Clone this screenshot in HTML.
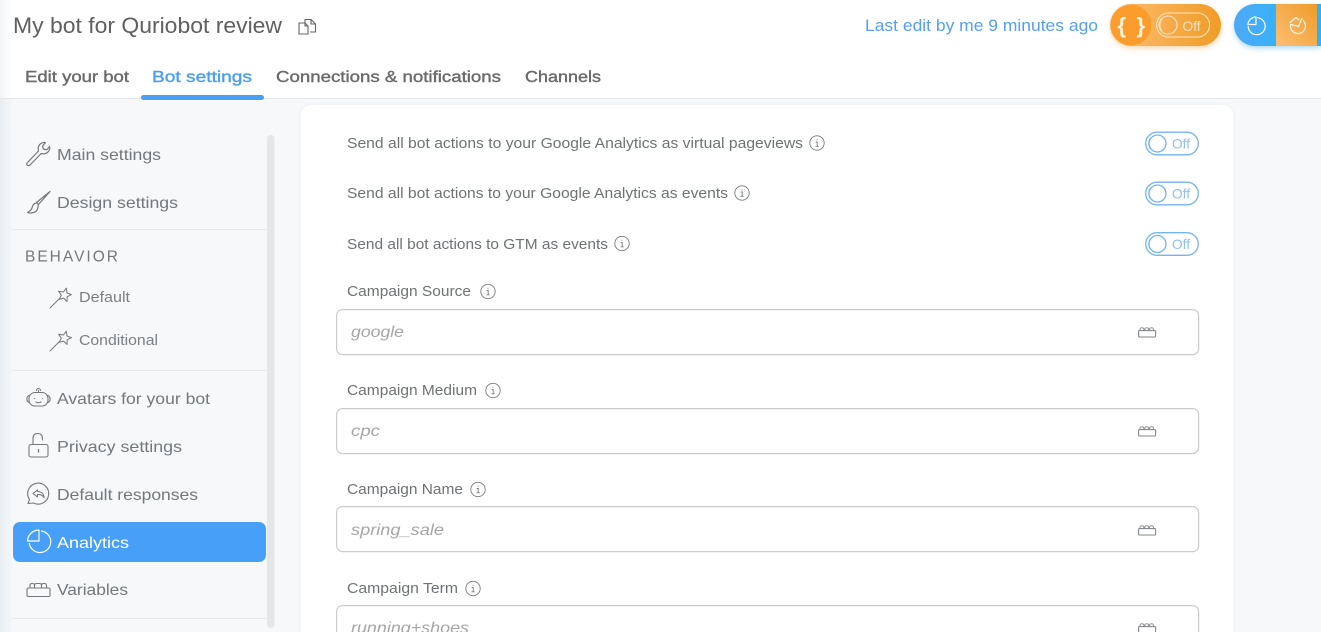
<!DOCTYPE html>
<html><head><meta charset="utf-8"><style>
html,body{margin:0;padding:0;width:1321px;height:632px;overflow:hidden;background:#fff}
svg{display:block;filter:blur(.25px)}
text{font-family:"Liberation Sans",sans-serif}
.g{fill:#74777b;font-size:16px}
.s{fill:#6f7275;font-size:14.5px}
.p{fill:#a6a6a6;font-size:16px;font-style:italic}
.t{fill:#6a6a6a;font-size:16px;stroke:#6a6a6a;stroke-width:.4}
.ic{fill:none;stroke:#75787c;stroke-width:1.2;stroke-linecap:round;stroke-linejoin:round}
.in{fill:#fff;stroke:#cbcbcb;stroke-width:1.2}
</style></head><body>
<svg width="1321" height="632" viewBox="0 0 1321 632" xmlns="http://www.w3.org/2000/svg">
<defs>
<linearGradient id="lg" x1="0" x2="1"><stop offset="0" stop-color="#e9eef2"/><stop offset="1" stop-color="#f6f8fa"/></linearGradient>
<linearGradient id="lh" x1="0" x2="1"><stop offset="0" stop-color="#f1f4f6"/><stop offset="1" stop-color="#fff"/></linearGradient>
<linearGradient id="or" x1="0" x2="1" y1="0" y2="0"><stop offset="0" stop-color="#fdbe75"/><stop offset="1" stop-color="#f09c26"/></linearGradient>
<linearGradient id="bl" x1="0" x2="1" y1="0" y2="0"><stop offset="0" stop-color="#4fa8f6"/><stop offset="1" stop-color="#1dbcfb"/></linearGradient>
<linearGradient id="or2" x1="0" x2="1" y1="1" y2="0"><stop offset="0" stop-color="#fdbe75"/><stop offset="1" stop-color="#ee9c2a"/></linearGradient>
<filter id="sh" x="-20%" y="-30%" width="140%" height="170%"><feGaussianBlur stdDeviation="3"/></filter>
<filter id="cs" x="-5%" y="-5%" width="110%" height="110%"><feGaussianBlur stdDeviation="2"/></filter>
<g id="info"><circle cx="0" cy="0" r="7.200" fill="none" stroke="#7a7c7f" stroke-width=".9"/><path d="M-1.300-1h1.500v4.200M-1.500 3.300h3.200M0-3.700v.9" fill="none" stroke="#7a7c7f" stroke-width=".9"/></g>
<g id="tog"><rect x="0.7" y="0.7" width="52.6" height="22.6" rx="11.3" fill="#fff" stroke="#76b4ef" stroke-width="1.3"/><circle cx="12.5" cy="12" r="8.5" fill="#fff" stroke="#76b4ef" stroke-width="1.3"/><path d="M5.5 6.5A9.5 9.5 0 0 0 5.5 17.5" fill="none" stroke="#76b4ef"/><text x="27" y="17" font-size="14" fill="#8fc0f0" textLength="18" lengthAdjust="spacingAndGlyphs">Off</text></g>
<g id="var"><rect x="0.6" y="3.6" width="17" height="6.4" rx="1" fill="none" stroke="#85878a" stroke-width="1.1"/><path d="M2 3.500V2.200q0-1.400 1.400-1.400h1q1.400 0 1.400 1.400v1.300M6.800 3.500V2.200q0-1.400 1.400-1.400h1q1.400 0 1.400 1.400v1.300M11.600 3.500V2.200q0-1.400 1.400-1.400h1q1.400 0 1.400 1.400v1.300" fill="none" stroke="#85878a" stroke-width=".9"/></g>
<g id="wand" class="ic" style="stroke-width:1"><path d="M0 20 9.500 10.500"/><path d="M16.300 .2 17 5 21.500 6.600 17.200 8.700 17 13.500 13.700 10.100 9.100 11.400 11.300 7.200 8.600 3.200 13.400 4z"/></g>
</defs>

<rect width="1321" height="98" fill="#fff"/>
<rect width="12" height="98" fill="url(#lh)"/>
<rect y="98" width="1321" height="534" fill="#f6f8fa"/>
<rect y="98" width="14" height="534" fill="url(#lg)"/>
<rect y="98" width="1321" height="1" fill="#e4e7ea"/>

<text x="13" y="33" font-size="22.500" fill="#606060" textLength="269" lengthAdjust="spacingAndGlyphs">My bot for Quriobot review</text>
<g fill="none" stroke="#646464" stroke-width="1.100" stroke-linejoin="round"><path d="M299 23h6l3 3v8h-9z"/><path d="M305 23v3h3"/><path d="M305 22.500V19.500h6l4.500 4.500v8H310"/><path d="M311 19.500v4.500h4.500"/></g>

<text x="25" y="82" class="t" textLength="104" lengthAdjust="spacingAndGlyphs">Edit your bot</text>
<text x="152" y="82" class="t" style="fill:#4b9ff3;stroke:#4b9ff3" textLength="100" lengthAdjust="spacingAndGlyphs">Bot settings</text>
<text x="276" y="82" class="t" textLength="225" lengthAdjust="spacingAndGlyphs">Connections &amp; notifications</text>
<text x="525" y="82" class="t" textLength="76" lengthAdjust="spacingAndGlyphs">Channels</text>
<rect x="141" y="95" width="123" height="5" rx="2.500" fill="#4b9ff3"/>

<text x="865" y="31" font-size="16.500" fill="#559ff0" textLength="233" lengthAdjust="spacingAndGlyphs">Last edit by me 9 minutes ago</text>

<!-- orange pill -->
<rect x="1111" y="7" width="110" height="41" rx="20" fill="#f9b566" opacity=".55" filter="url(#sh)"/>
<rect x="1110" y="4" width="111" height="42" rx="21" fill="url(#or)"/>
<circle cx="1131" cy="25" r="20.500" fill="#fb9d2c"/>
<text x="1117.500" y="33" font-size="22" font-weight="bold" fill="#fff3e0">{</text>
<text x="1136.500" y="33" font-size="22" font-weight="bold" fill="#fff3e0">}</text>
<rect x="1156.600" y="13" width="53" height="24" rx="12" fill="none" stroke="#fde3c0" stroke-width="1.100"/>
<circle cx="1168" cy="25" r="9" fill="none" stroke="#fde3c0" stroke-width="1.100"/>
<path d="M1161.500 19.500a10 10 0 0 0 0 11" fill="none" stroke="#fde3c0"/>
<text x="1182.500" y="31" font-size="14" fill="#fde3c0" textLength="18" lengthAdjust="spacingAndGlyphs">Off</text>

<!-- blue pill -->
<path d="M1255 7h66v41h-66a20 20 0 0 1 0-41z" fill="#4fb4f8" opacity=".5" filter="url(#sh)"/>
<path d="M1255 4h66v42h-66a21 21 0 0 1 0-42z" fill="url(#bl)"/>
<rect x="1276" y="4" width="41" height="42" fill="url(#or2)"/>
<rect x="1317" y="4" width="4" height="42" fill="#2cb2f8"/>
<g fill="none" stroke="#fff" stroke-width="1.200" stroke-linejoin="round" stroke-linecap="round">
<path d="M1257.500 17.700A8.500 8.500 0 1 1 1248.200 26.500"/><path d="M1256 17V24.500H1247.800A8.500 8.500 0 0 1 1256 17z"/>
</g>
<g fill="none" stroke="#fff6e8" stroke-width="1.200" stroke-linejoin="round" stroke-linecap="round">
<path d="M1303.500 21A7.500 7.500 0 1 1 1290.600 24.500L1298.500 26.500 1302 18.500"/><path d="M1290 22.500 1296 17.500 1299 20"/>
</g>

<!-- sidebar -->
<rect x="267" y="135" width="7.500" height="493" rx="3.500" fill="#e5e6e8"/>

<path class="ic" d="M27.500 162.500l11-11.500c-1.500-5 2-9 7-8.500l-3 3.500 1 3 3.200.8 3-3.300c.8 4.800-3.800 8.500-8.500 7l-11.200 11.500c-2.200 1.600-4.600-.5-2.500-2.500z"/>
<text x="57" y="160" class="g" textLength="104" lengthAdjust="spacingAndGlyphs">Main settings</text>

<path class="ic" d="M50 191.500 36.500 202.500 38.500 204.500 50 191.500zM36.500 203c-3 .3-4 2.500-4.500 5-.4 2-2.500 3.300-4.500 4.500 3.500 1 8.500.3 9.800-3 .8-1.800 1-3.500 1-5"/>
<text x="57" y="208" class="g" textLength="121" lengthAdjust="spacingAndGlyphs">Design settings</text>

<rect x="13" y="229" width="253" height="1" fill="#e7e9eb"/>
<text x="25" y="261.500" font-size="15.500" fill="#75777b" textLength="93" lengthAdjust="spacing">BEHAVIOR</text>

<use href="#wand" x="50" y="288"/>
<text x="79" y="302" class="s" style="fill:#7d8083" textLength="51" lengthAdjust="spacingAndGlyphs">Default</text>
<use href="#wand" x="50" y="331"/>
<text x="79" y="345" class="s" style="fill:#7d8083" textLength="79" lengthAdjust="spacingAndGlyphs">Conditional</text>

<rect x="13" y="370" width="253" height="1" fill="#e7e9eb"/>

<g class="ic" style="stroke-width:1.100"><rect x="29" y="392.500" width="19" height="13.500" rx="6"/><path d="M29 395.500c-2.800 1-2.800 6 0 7M48 395.500c2.800 1 2.800 6 0 7M38.500 392.500v-2"/><path d="M36.500 390.500a2 2 0 0 1 4 0"/><path d="M34.500 398.500h.2M42.500 398.500h.2M36 402q2.500 1.500 5 0"/></g>
<text x="57" y="404" class="g" textLength="153" lengthAdjust="spacingAndGlyphs">Avatars for your bot</text>

<g class="ic" style="stroke-width:1.100"><rect x="29" y="444.500" width="19" height="12.500" rx="2"/><path d="M33 444.500v-6q0-5 4.700-5t4.700 5v1.500"/><path d="M38.500 449.500v2.500" style="stroke-width:1.300"/></g>
<text x="57" y="452" class="g" textLength="125" lengthAdjust="spacingAndGlyphs">Privacy settings</text>

<g class="ic" style="stroke-width:1.100"><path d="M28 503.500l1.500-4a10.500 10.500 0 1 1 4 3.500z"/><path d="M37.500 490l-4.500 3.500 4.500 3.500v-2.500c3-.4 5 .8 6.500 3-.3-3.500-2.500-6-6.500-6z"/></g>
<text x="57" y="500" class="g" textLength="141" lengthAdjust="spacingAndGlyphs">Default responses</text>

<rect x="13" y="522" width="253" height="40" rx="7" fill="#479ff8"/>
<g fill="none" stroke="#fff" stroke-width="1.200" stroke-linejoin="round"><path d="M41 531A10.800 10.800 0 1 1 29.200 543"/><path d="M39 530V541H27.500A11.500 11.500 0 0 1 39 530z"/></g>
<text x="57" y="548" class="g" style="fill:#fff" textLength="72" lengthAdjust="spacingAndGlyphs">Analytics</text>

<g class="ic" style="stroke-width:1.100"><rect x="27" y="588" width="23" height="8.500" rx="1.200"/><path d="M30 588v-2.500q0-2 2-2h.5q2 0 2 2v2.500M34.500 588v-2.500q0-2 2-2h3q2 0 2 2v2.500M41.500 588v-2.500q0-2 2-2h1q2 0 2 2v2.500"/></g>
<text x="57" y="595" class="g" textLength="71" lengthAdjust="spacingAndGlyphs">Variables</text>
<rect x="13" y="618" width="253" height="1" fill="#e7e9eb"/>

<!-- card -->
<rect x="301" y="105" width="932" height="560" rx="10" fill="#dfe3e8" opacity=".5" filter="url(#cs)"/>
<rect x="301" y="105" width="932" height="560" rx="10" fill="#fff"/>

<text x="347" y="148" class="s" textLength="456" lengthAdjust="spacingAndGlyphs">Send all bot actions to your Google Analytics as virtual pageviews</text>
<use href="#info" x="817" y="143"/>
<use href="#tog" x="1145" y="131.500"/>

<text x="347" y="198" class="s" textLength="381" lengthAdjust="spacingAndGlyphs">Send all bot actions to your Google Analytics as events</text>
<use href="#info" x="742" y="193"/>
<use href="#tog" x="1145" y="181.500"/>

<text x="347" y="249" class="s" textLength="261" lengthAdjust="spacingAndGlyphs">Send all bot actions to GTM as events</text>
<use href="#info" x="622" y="243.500"/>
<use href="#tog" x="1145" y="232"/>

<text x="347" y="296" class="s" textLength="124" lengthAdjust="spacingAndGlyphs">Campaign Source</text>
<use href="#info" x="488" y="291.500"/>
<rect class="in" x="336.600" y="309.600" width="862" height="45" rx="6"/>
<text x="351" y="337" class="p" textLength="53" lengthAdjust="spacingAndGlyphs">google</text>
<use href="#var" x="1138" y="327"/>

<text x="347" y="395" class="s" textLength="130" lengthAdjust="spacingAndGlyphs">Campaign Medium</text>
<use href="#info" x="493" y="390.500"/>
<rect class="in" x="336.600" y="408.600" width="862" height="45" rx="6"/>
<text x="351" y="436" class="p" textLength="29" lengthAdjust="spacingAndGlyphs">cpc</text>
<use href="#var" x="1138" y="426"/>

<text x="347" y="494" class="s" textLength="116" lengthAdjust="spacingAndGlyphs">Campaign Name</text>
<use href="#info" x="478" y="489.500"/>
<rect class="in" x="336.600" y="506.600" width="862" height="45" rx="6"/>
<text x="351" y="535" class="p" textLength="93" lengthAdjust="spacingAndGlyphs">spring_sale</text>
<use href="#var" x="1138" y="525"/>

<text x="347" y="593" class="s" textLength="111" lengthAdjust="spacingAndGlyphs">Campaign Term</text>
<use href="#info" x="473" y="588.500"/>
<rect class="in" x="336.600" y="605.600" width="862" height="45" rx="6"/>
<text x="351" y="633" class="p" textLength="118" lengthAdjust="spacingAndGlyphs">running+shoes</text>
<use href="#var" x="1138" y="623"/>
</svg>
</body></html>
